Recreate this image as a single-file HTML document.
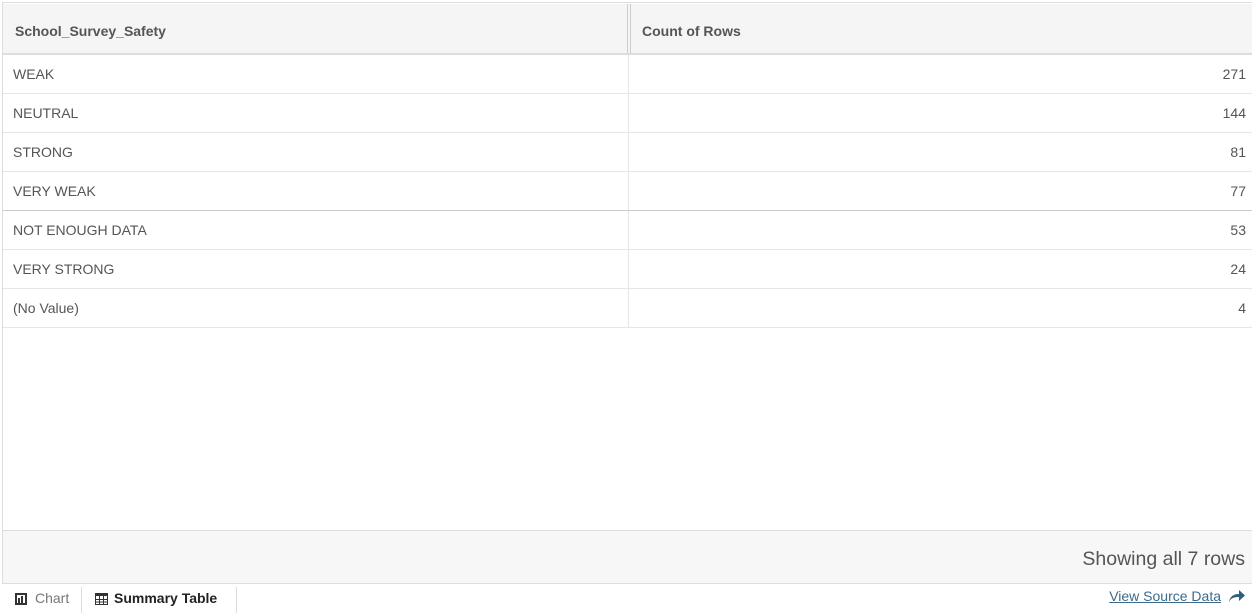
<!DOCTYPE html>
<html><head><meta charset="utf-8"><style>
*{box-sizing:border-box;margin:0;padding:0}
body{width:1252px;height:613px;background:#fff;font-family:"Liberation Sans",sans-serif;color:#555;position:relative;overflow:hidden}
.wrap{position:absolute;left:2px;top:2px;width:1250px;height:582px;border:1px solid #ddd;border-right:none}
.hdr{position:absolute;left:0;top:1px;width:1250px;height:51px;background:#f5f5f5;border-bottom:2px solid #ddd}
.hdr div{position:absolute;top:0;height:49px;line-height:54px;font-weight:bold;font-size:14px;color:#555}
.row{position:absolute;left:0;width:1250px;height:39px;border-bottom:1px solid #e6e6e6;font-size:14px;line-height:38px}
.row .a{position:absolute;left:10px}
.row .b{position:absolute;right:7px}
.row .d{position:absolute;left:625px;top:0;height:38px;border-left:1px solid #e6e6e6}
.foot{position:absolute;left:0;top:527px;width:1250px;height:54px;background:#f7f7f7;border-top:1px solid #ddd;border-bottom:1px solid #ddd;font-size:19.5px;text-align:right;padding-right:8px;line-height:56px;color:#555}
.tabs{position:absolute;left:0;top:584px;height:29px;font-size:14px;line-height:29px}
</style></head><body>
<div class="wrap">
<div class="hdr">
<div style="left:12px">School_Survey_Safety</div>
<div style="left:624px;width:4px;border-left:1px solid #ccc;border-right:1px solid #ccc;height:49px;top:0"></div>
<div style="left:639px">Count of Rows</div>
</div>
<div class="row" style="top:52px"><span class="a">WEAK</span><span class="d"></span><span class="b">271</span></div>
<div class="row" style="top:91px"><span class="a">NEUTRAL</span><span class="d"></span><span class="b">144</span></div>
<div class="row" style="top:130px"><span class="a">STRONG</span><span class="d"></span><span class="b">81</span></div>
<div class="row" style="top:169px;border-bottom-color:#ccc"><span class="a">VERY WEAK</span><span class="d"></span><span class="b">77</span></div>
<div class="row" style="top:208px"><span class="a">NOT ENOUGH DATA</span><span class="d"></span><span class="b">53</span></div>
<div class="row" style="top:247px"><span class="a">VERY STRONG</span><span class="d"></span><span class="b">24</span></div>
<div class="row" style="top:286px"><span class="a">(No Value)</span><span class="d"></span><span class="b">4</span></div>
<div class="foot">Showing all 7 rows</div>
</div>
<div class="tabs">
<span style="position:absolute;left:15px;top:9px;width:12px;height:12px;background:#333"><span style="position:absolute;left:2px;top:2px;width:8px;height:8px;background:#fff"></span><span style="position:absolute;left:3px;top:5px;width:2px;height:5px;background:#333"></span><span style="position:absolute;left:6px;top:3px;width:2px;height:7px;background:#333"></span></span>
<span style="position:absolute;left:35px;color:#777">Chart</span>
<span style="position:absolute;left:81px;top:3px;height:26px;border-left:1px solid #ddd"></span>
<svg style="position:absolute;left:95px;top:9px" width="13" height="12" viewBox="0 0 13 12"><rect x="0.5" y="0.5" width="12" height="11" fill="none" stroke="#333"/><rect x="0" y="0" width="13" height="3" fill="#333"/><path d="M0 6.5H13M0 9H13M4.5 0V12M8.5 0V12" stroke="#333"/></svg>
<span style="position:absolute;left:114px;font-weight:bold;color:#222;white-space:nowrap">Summary Table</span>
<span style="position:absolute;left:236px;top:3px;height:26px;border-left:1px solid #ddd"></span>
</div>
<span style="position:absolute;right:31px;top:588px;font-size:14px;color:#3d6b8e;text-decoration:underline">View Source Data</span>
<svg style="position:absolute;left:1228px;top:589px" width="18" height="14" viewBox="0 0 18 14"><path d="M1 13C2 7 6 5 11 5V1L17 6.5L11 12V8C6 8 3 9 1 13Z" fill="#2d5f80"/></svg>
</body></html>
